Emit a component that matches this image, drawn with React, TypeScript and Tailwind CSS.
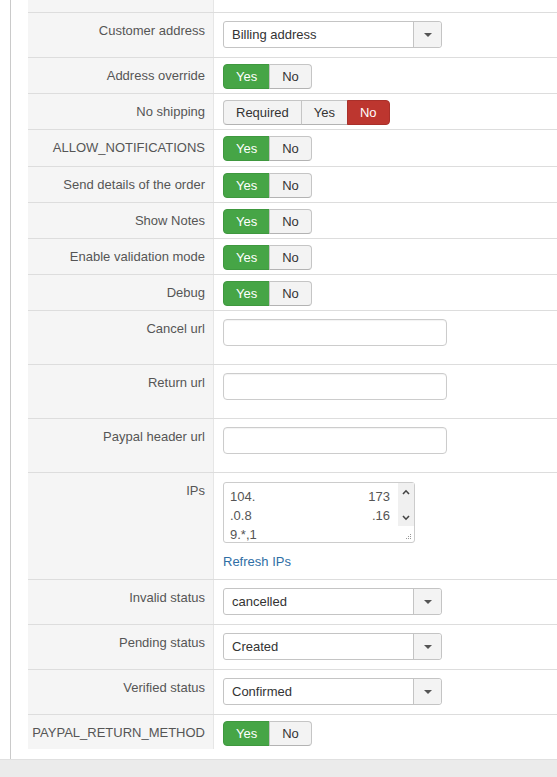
import type { ReactNode } from "react";

type Choice = { label: string; tone?: "green" | "red" };

// one button group, the picked option is tinted
const Toggle = ({ options }: { options: Choice[] }) => (
  <div className="flex h-[25px]">
    {options.map((opt, i) => {
      const first = i === 0;
      const last = i === options.length - 1;
      let tone = "border-[#c5c5c5] border-b-[#b3b3b3] bg-[#f3f3f3] text-[#333]";
      if (opt.tone === "green") tone = "border-[#3f983f] bg-[#46a546] text-white";
      if (opt.tone === "red") tone = "border-[#a9302a] bg-[#bd362f] text-white";
      return (
        <span
          key={opt.label}
          className={[
            "flex items-center border px-3 leading-none",
            tone,
            first ? "rounded-l-[4px]" : "-ml-px",
            last ? "rounded-r-[4px]" : "",
          ].join(" ")}
        >
          {opt.label}
        </span>
      );
    })}
  </div>
);

const yesNo: Choice[] = [{ label: "Yes", tone: "green" }, { label: "No" }];

const Select = ({ value }: { value: string }) => (
  <div className="flex h-[27px] w-[219px] rounded-[3px] border border-[#c4c4c4] bg-white">
    <div className="flex flex-1 items-center pl-2 text-[#333]">{value}</div>
    <div className="flex w-[28px] items-center justify-center rounded-r-[3px] border-l border-[#c4c4c4] bg-[#f3f3f3]">
      <span className="h-0 w-0 border-x-[4px] border-t-[4px] border-x-transparent border-t-[#555]" />
    </div>
  </div>
);

const TextInput = () => (
  <div className="h-[27px] w-[224px] rounded-[4px] border border-[#ccc] bg-white shadow-[inset_0_1px_1px_rgba(0,0,0,0.05)]" />
);

const Row = ({
  label,
  children,
  pad = "pt-2 pb-[9px]",
}: {
  label: string;
  children?: ReactNode;
  pad?: string;
}) => (
  <div className="flex border-t border-[#ddd]">
    <div className="w-[186px] shrink-0 border-r border-[#e6e6e6] bg-[#f5f5f5] pr-2 pt-[9px] text-right leading-[18px] text-[#555]">
      {label}
    </div>
    <div className={"flex-1 pl-[9px] " + pad}>{children}</div>
  </div>
);

const toggleRow = "pt-[6px] pb-[4px]";
const inputRow = "pt-2 pb-[18px]";

const IpList = () => (
  <div className="relative flex h-[61px] w-[192px] rounded-[3px] border border-[#ccc] bg-white">
    <div className="flex-1 pl-[6px] pr-2 pt-[4px] leading-[19px] text-[#555]">
      <div className="flex justify-between">
        <span>104.</span>
        <span>173</span>
      </div>
      <div className="flex justify-between">
        <span>.0.8</span>
        <span>.16</span>
      </div>
      <div>9.*,1</div>
    </div>
    <div className="flex h-[43px] w-[16px] flex-col items-center justify-between bg-[#f0f0f0] pb-[5px] pt-[6px]">
      <svg width="8" height="6" viewBox="0 0 8 6">
        <path d="M1 5 L4 1.8 L7 5" fill="none" stroke="#444" strokeWidth="1.6" />
      </svg>
      <svg width="8" height="6" viewBox="0 0 8 6">
        <path d="M1 1 L4 4.2 L7 1" fill="none" stroke="#444" strokeWidth="1.6" />
      </svg>
    </div>
    {/* resize grip */}
    <svg className="absolute bottom-[2px] right-[2px]" width="7" height="7" viewBox="0 0 7 7">
      <rect x="5" y="1" width="1" height="1" fill="#999" />
      <rect x="3" y="3" width="1" height="1" fill="#999" />
      <rect x="5" y="3" width="1" height="1" fill="#999" />
      <rect x="1" y="5" width="1" height="1" fill="#999" />
      <rect x="3" y="5" width="1" height="1" fill="#999" />
      <rect x="5" y="5" width="1" height="1" fill="#999" />
    </svg>
  </div>
);

export default function App() {
  return (
    <div className="flex min-h-[777px] w-full flex-col overflow-hidden bg-white font-['Liberation_Sans',Arial,sans-serif] text-[13px]">
      <div className="ml-[10px] flex-1 border-l border-[#cacaca] pb-[10px] pl-[17px]">
        <div className="flex h-[12px]">
          <div className="w-[186px] shrink-0 border-r border-[#e6e6e6] bg-[#f5f5f5]" />
        </div>

        <Row label="Customer address">
          <Select value="Billing address" />
        </Row>
        <Row label="Address override" pad={toggleRow}>
          <Toggle options={yesNo} />
        </Row>
        <Row label="No shipping" pad={toggleRow}>
          <Toggle options={[{ label: "Required" }, { label: "Yes" }, { label: "No", tone: "red" }]} />
        </Row>
        <Row label="ALLOW_NOTIFICATIONS" pad="pt-[6px] pb-[5px]">
          <Toggle options={yesNo} />
        </Row>
        <Row label="Send details of the order" pad={toggleRow}>
          <Toggle options={yesNo} />
        </Row>
        <Row label="Show Notes" pad={toggleRow}>
          <Toggle options={yesNo} />
        </Row>
        <Row label="Enable validation mode" pad={toggleRow}>
          <Toggle options={yesNo} />
        </Row>
        <Row label="Debug" pad={toggleRow}>
          <Toggle options={yesNo} />
        </Row>

        <Row label="Cancel url" pad={inputRow}>
          <TextInput />
        </Row>
        <Row label="Return url" pad={inputRow}>
          <TextInput />
        </Row>
        <Row label="Paypal header url" pad={inputRow}>
          <TextInput />
        </Row>

        <Row label="IPs" pad="pt-[9px] pb-2">
          <IpList />
          <div className="mt-[10px] leading-[18px] text-[#2f6ea5]">Refresh IPs</div>
        </Row>

        <Row label="Invalid status">
          <Select value="cancelled" />
        </Row>
        <Row label="Pending status">
          <Select value="Created" />
        </Row>
        <Row label="Verified status">
          <Select value="Confirmed" />
        </Row>
        <Row label="PAYPAL_RETURN_METHOD" pad="pt-[6px] pb-[3px]">
          <Toggle options={yesNo} />
        </Row>
      </div>
      <div className="h-[18px] border-t border-[#e0e0e0] bg-[#ebebeb]" />
    </div>
  );
}
